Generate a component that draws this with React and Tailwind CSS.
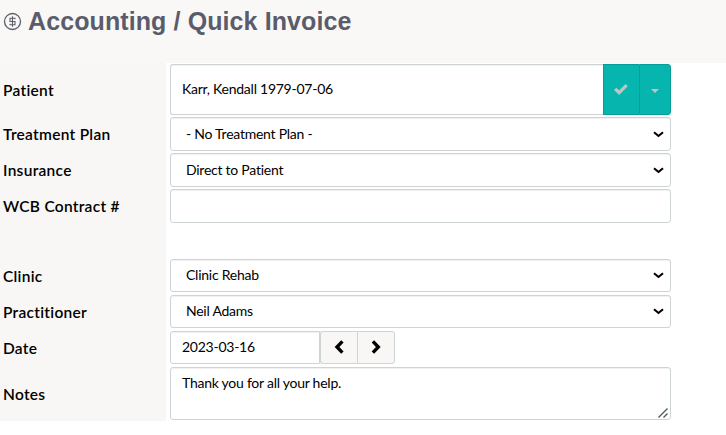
import React from 'react';

const FIELD = "border border-[#ced4d4] rounded-[3px] bg-white shadow-[inset_0_1px_1px_rgba(0,0,0,0.06)] text-black text-[14px] leading-[20px] tracking-[-0.25px]";

function Row({ label, height, children }) {
    return (
        <div className={`flex ${height}`}>
            <div className="w-[166px] shrink-0 bg-[#f8f7f5] pl-[3px] flex items-center text-[15.5px] leading-[20px] tracking-[0.28px] font-semibold text-black whitespace-nowrap">
                {label}
            </div>
            <div className="pt-px pl-1 flex items-start">{children}</div>
        </div>
    );
}

function SelectField({ value, size = "h-[34px] pt-[6px]" }) {
    return (
        <div className={`${FIELD} ${size} w-[501px] pl-[15px] pr-[6px] flex items-start justify-between`}>
            <span className="whitespace-pre">{value}</span>
            <svg className="w-[11px] h-[7px] mt-[7px]" viewBox="0 0 11 7" fill="none" stroke="#000" strokeWidth="2.1">
                <path d="M1 1.2 L5.5 5 L10 1.2" />
            </svg>
        </div>
    );
}

export default function App() {
    return (
        <div className="h-[435px] w-[726px] overflow-hidden bg-white font-['Lato',sans-serif]">
            {/* Page title */}
            <header className="h-[63px] bg-[#f9f8f6] pl-[3px] pt-[6px] flex items-start">
                <svg className="w-[19px] h-[19px] mt-[6px] mr-[6px]" viewBox="0 0 19 19" fill="none" stroke="#5b5c6b" strokeWidth="1.3">
                    <circle cx="9.5" cy="9.5" r="8" />
                    <path d="M12 7.2 V6.3 H7 V9.5 H12 V12.7 H7 V11.8 M9.5 4.2 V14.8" strokeWidth="1.1" />
                </svg>
                <h1 className="font-['Liberation_Sans',Arial,sans-serif] font-bold text-[25px] leading-[30px] tracking-[0.1px] text-[#5b5c6b] whitespace-nowrap">
                    Accounting / Quick Invoice
                </h1>
            </header>

            <main>
                <Row label="Patient" height="h-[53px]">
                    <div className={`${FIELD} w-[433px] h-[51px] rounded-r-none border-r-0 pl-[11px] pb-[2px] flex items-center`}>
                        Karr, Kendall 1979-07-06
                    </div>
                    <button className="w-[36px] h-[51px] bg-[#06b5ae] border border-r-0 border-[#059d97] flex items-center justify-center">
                        <svg className="w-[14px] h-[11px] mr-px mb-px" viewBox="0 0 14 11">
                            <path d="M0 6 L2.3 3.7 L5.2 6.2 L11.6 0 L13.8 2.3 L5.2 11 Z" fill="#bfc4c4" />
                        </svg>
                    </button>
                    <button className="w-[32px] h-[51px] bg-[#06b5ae] border border-[#059d97] rounded-r-[3px] flex items-center justify-center">
                        <svg className="w-[8px] h-[4px] mt-[3px] mr-px" viewBox="0 0 8 4">
                            <path d="M0 0 H8 L4 4 Z" fill="#bfc4c4" />
                        </svg>
                    </button>
                </Row>
                <Row label="Treatment Plan" height="h-[36px]">
                    <SelectField value="- No Treatment Plan -" />
                </Row>
                <Row label="Insurance" height="h-[36px]">
                    <SelectField value="Direct to Patient" />
                </Row>
                <Row label="WCB Contract #" height="h-[36px]">
                    <div className={`${FIELD} w-[501px] h-[34px]`} />
                </Row>
                <Row height="h-[34px]" />
                <Row label="Clinic" height="h-[36px]">
                    <SelectField value="Clinic Rehab" size="h-[33px] pt-[5px]" />
                </Row>
                <Row label="Practitioner" height="h-[36px]">
                    <SelectField value="Neil Adams" size="h-[33px] pt-[5px]" />
                </Row>
                <Row label="Date" height="h-[36px]">
                    <div className={`${FIELD} w-[150px] h-[33px] rounded-r-none pl-[11px] pb-px flex items-center`}>2023-03-16</div>
                    <button className="w-[37px] h-[33px] bg-[#f8f7f5] border border-r-0 border-[#ced4d4] rounded-l-[3px] flex items-center justify-center">
                        <svg className="w-[10px] h-[14px] mr-px mb-px" viewBox="0 0 10 14" fill="none" stroke="#000" strokeWidth="3.4">
                            <path d="M8.4 1.4 L3 7 L8.4 12.6" />
                        </svg>
                    </button>
                    <button className="w-[38px] h-[33px] bg-[#f8f7f5] border border-[#ced4d4] rounded-r-[3px] flex items-center justify-center">
                        <svg className="w-[10px] h-[14px] mb-px" viewBox="0 0 10 14" fill="none" stroke="#000" strokeWidth="3.4">
                            <path d="M1.9 1.4 L7.3 7 L1.9 12.6" />
                        </svg>
                    </button>
                </Row>
                <Row label="Notes" height="h-[55px]">
                    <div className={`${FIELD} w-[501px] h-[53px] pl-[11px] pr-[2px] pb-px pt-[5px] flex justify-between`}>
                        <span>Thank you for all your help.</span>
                        {/* Resize grip */}
                        <svg className="w-[10px] h-[10px] self-end" viewBox="0 0 10 10" fill="none" stroke="#55565f" strokeWidth="1.4">
                            <path d="M0.5 9.5 L9.5 0.5 M5.5 9.5 L9.5 5.5" />
                        </svg>
                    </div>
                </Row>
            </main>
        </div>
    );
}
